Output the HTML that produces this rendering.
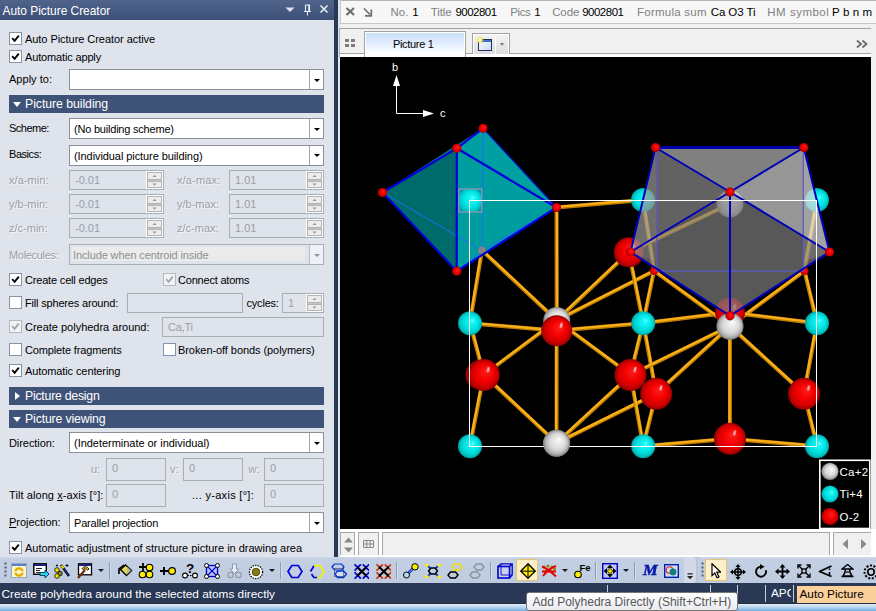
<!DOCTYPE html>
<html><head><meta charset="utf-8"><title>Auto Picture Creator</title>
<style>
*{box-sizing:border-box;margin:0;padding:0}
html,body{width:876px;height:611px;overflow:hidden;background:#f0f0f0}
body{position:relative;font-family:"Liberation Sans",sans-serif;font-size:11px;color:#000}
div,span,svg{position:absolute}
#left{left:0;top:0;width:334px;height:557px;background:#dee3ec}
#ltitle{left:0;top:0;width:334px;height:20px;background:linear-gradient(#51648b,#3c5077);color:#fff;font-size:11.9px;line-height:20px;white-space:nowrap}
#ltitle span{left:2.5px;top:1px}
#lstrip{left:334px;top:0;width:4px;height:557px;background:#293955}
#lstrip2{left:338px;top:0;width:2px;height:557px;background:#dfe3ea}
.t{white-space:nowrap;line-height:13px;height:13px}
.dis{color:#9b9ea5;text-shadow:1px 1px 0 #f8f9fb}
.cb{width:13px;height:13px;background:#fff;border:1px solid #8593aa}
.cb.d{background:#f2f3f5;border-color:#b5b8bd}
.cb svg{left:1px;top:1px;width:9px;height:9px}
.combo{height:21px;background:#fff;border:1px solid #8a8f99}
.combo .sep{right:13px;top:0;width:1px;height:19px;background:#9ea3ac}
.combo .ar{right:3.5px;top:8.5px;width:0;height:0;border-left:3px solid transparent;border-right:3px solid transparent;border-top:3.5px solid #000}
.combo .tx{left:4px;top:4px;white-space:nowrap;line-height:13px}
.combo.d{background:#dee3ec;border-color:#a9adb4}
.combo.d .tx{color:#8d9096;left:2px;top:2px;padding-top:1px;width:233px;height:14px;background:#ebebeb;line-height:14px;padding-left:1px}
.combo.d .sep{background:#b9bcc2;box-shadow:1px 0 0 #eef1f6,2px 0 0 #eef1f6,3px 0 0 #eef1f6,4px 0 0 #eef1f6,5px 0 0 #eef1f6,6px 0 0 #eef1f6,7px 0 0 #eef1f6,8px 0 0 #eef1f6,9px 0 0 #eef1f6,10px 0 0 #eef1f6,11px 0 0 #eef1f6,12px 0 0 #eef1f6,13px 0 0 #eef1f6}
.combo.d .ar{border-top-color:#8d9096}
.fld{background:#dee3ec;border:1px solid #a9adb4}
.fld .tx{left:5px;top:3px;color:#9b9ea5;line-height:13px;white-space:nowrap}
.spin{right:0;top:0;width:17px;height:18px;background:#fdfdfd}
.spin b{position:absolute;left:1px;width:15px;border:1px solid #b4b4b4;background:#ececec}
.spin b.u{top:1px;height:7.5px}
.spin b.dn{top:9.5px;height:7.5px}
.spin em{position:absolute;left:1px;top:8px;width:15px;height:2px;background:#c2c2c2}
.spin svg{left:6px;width:5px;height:3.3px}
.hdr{left:9px;width:315px;height:18px;background:#3f5379;color:#fff;font-size:12.3px;line-height:18px}
.hdr span{left:16px;top:0;white-space:nowrap}
.hdr i{position:absolute;width:0;height:0}
.hdr i.dn{left:4px;top:7px;border-left:4px solid transparent;border-right:4px solid transparent;border-top:5px solid #fff}
.hdr i.rt{left:6px;top:5px;border-top:4px solid transparent;border-bottom:4px solid transparent;border-left:5px solid #fff}
u{text-decoration:underline}
#info{left:340px;top:0;width:536px;height:24px;background:#f7f7f7;border-top:1px solid #b4b4b4;border-left:1px solid #c8c8c8}
#info .ib{left:0;top:22px;width:536px;height:1px;background:#c6c6c6}
.it{top:4px;font-size:11.5px;line-height:15px;color:#7f7f7f;white-space:nowrap}
.it.v{color:#000}
#tabbar{left:339px;top:28px;width:532px;height:29px;background:#f0f0f0;border-top:1px solid #a3a3a3;border-left:1px solid #b0b0b0}
#tabbar .ln{left:0;top:24px;width:531px;height:1px;background:#a3a3a3}
#tabbar .wh{left:0;top:25px;width:531px;height:3px;background:#fff}
#tab{left:24px;top:2px;width:102px;height:26px;border:1px solid #a3a3a3;border-bottom:0;background:linear-gradient(#c9defa,#e4effd 50%,#fff 85%);box-shadow:inset 1px 1px 0 #fff,inset -1px 0 0 #fff}
#tab span{left:28px;top:6px;line-height:13px;font-size:11px;letter-spacing:-0.33px;white-space:nowrap}
#newbtn{left:132px;top:4px;width:38px;height:21px;border:1px solid #a3a3a3;border-bottom:0;background:linear-gradient(#f4f4f4,#dcdcdc);box-shadow:inset 1px 1px 0 #fff,inset -1px 0 0 #fff}
#newbtn .sp{left:21.5px;top:2px;width:1px;height:18px;background:#fff}
#newbtn .ar{left:27px;top:8.5px;width:0;height:0;border-left:2.5px solid transparent;border-right:2.5px solid transparent;border-top:3px solid #7a7a7a}

#tb{left:0;top:557px;width:876px;height:26px;background:#b9c6dc}
#tb1{left:0;top:0;width:684px;height:26px;background:linear-gradient(#d3dbe9 0,#c3cfe2 2px,#bfcbdf 100%)}
#tb1o{left:684px;top:0;width:11.5px;height:26px;background:#d2dae8;border-radius:0 4px 4px 0}
#tb2{left:698px;top:0;width:178px;height:26px;background:linear-gradient(#d3dbe9 0,#c3cfe2 2px,#bfcbdf 100%);border-radius:4px 0 0 4px}
.tsep{top:4.5px;width:1px;height:17px;background:#8d99b0;box-shadow:1px 0 0 #d6deeb}
.tdd{top:11.5px;width:0;height:0;border-left:3px solid transparent;border-right:3px solid transparent;border-top:3px solid #1a1a1a}
.thl{top:2px;height:22px;background:#fdf0c8;border:1px solid #e5c66f;border-radius:2px}
#sb{left:0;top:583px;width:876px;height:20px;background:#293955;overflow:hidden}
#sbt{left:1.5px;top:3px;color:#fff;font-size:11.8px;line-height:16px;white-space:nowrap}
.ssep{top:2px;width:1px;background:#c3cbdc}
#apc{left:771px;top:2px;width:20px;overflow:hidden;color:#fff;font-size:11.8px;line-height:16px;white-space:nowrap}
#aptab{left:797px;top:2.5px;width:79px;height:17px;background:#fbd09a}
#aptab span{left:2.5px;top:0;font-size:11.8px;line-height:16px;white-space:nowrap;color:#000}
#bot{left:0;top:603px;width:876px;height:8px;background:linear-gradient(#222f47 0,#222f47 1px,#dfeaf6 1.5px,#bcd6ee 4px,#6fb0e4 8px)}
#tip{left:526px;top:592px;width:212px;height:19px;background:linear-gradient(#fff,#e9ebf1);border:1px solid #767676;border-radius:3px}
#tip span{left:5.5px;top:0.5px;font-size:12px;line-height:16px;color:#575757;white-space:nowrap}
#pic{left:340px;top:57px;width:531px;height:472px;background:#000}
#botrow{left:340px;top:529px;width:536px;height:28px;background:#fff}
#botrow .bx{top:3px;height:23px;background:#f0f0f0;border:1px solid #a8a8a8;border-bottom:0}

</style></head><body>
<div id="left"><div id="ltitle"><span>Auto Picture Creator</span>
<svg style="left:284px;top:3px" width="50" height="14" viewBox="0 0 50 14"><path d="M1.5 4.5 h9 l-4.5 4.5z" fill="#dfe4ee"/><path d="M21.5 8.5 v-6.5 h4 v6.5 M20 8.5 h7 M23.5 8.5 v4 M24.8 2 v6.5" fill="none" stroke="#e8ecf3" stroke-width="1.1"/><path d="M36.5 2.5 l7 7 M43.5 2.5 l-7 7" stroke="#eef1f6" stroke-width="1.5"/></svg>
</div>
<div class="cb" style="left:9px;top:32px"><svg viewBox="0 0 9 9"><path d="M1.2 4.2 L3.6 6.8 L7.8 1.6" fill="none" stroke="#000" stroke-width="1.9"/></svg></div>
<span class="t " style="left:25px;top:33px;letter-spacing:-0.05px">Auto Picture Creator active</span>
<div class="cb" style="left:9px;top:50px"><svg viewBox="0 0 9 9"><path d="M1.2 4.2 L3.6 6.8 L7.8 1.6" fill="none" stroke="#000" stroke-width="1.9"/></svg></div>
<span class="t " style="left:25px;top:51px;letter-spacing:-0.15px">Automatic apply</span>
<span class="t " style="left:9px;top:72.5px;letter-spacing:0.02px">Apply to:</span>
<div class="combo" style="left:69px;top:69px;width:255px"><span class="tx" style=""></span><div class="sep"></div><div class="ar"></div></div>
<div class="hdr" style="top:95px"><i class="dn"></i><span style="letter-spacing:-0.06px">Picture building</span></div>
<span class="t " style="left:9px;top:121.5px;letter-spacing:-0.5px">Scheme:</span>
<div class="combo" style="left:69px;top:118px;width:255px"><span class="tx" style="letter-spacing:-0.21px">(No building scheme)</span><div class="sep"></div><div class="ar"></div></div>
<span class="t " style="left:9px;top:148px;letter-spacing:-0.45px">Basics:</span>
<div class="combo" style="left:69px;top:144.5px;width:255px"><span class="tx" style="letter-spacing:-0.08px">(Individual picture building)</span><div class="sep"></div><div class="ar"></div></div>
<span class="t dis" style="left:9px;top:174px;letter-spacing:0.06px">x/a-min:</span>
<div class="fld" style="left:69px;top:170px;width:95px;height:20px"><span class="tx" style="top:2.5px">-0.01</span><div class="spin"><em></em><b class="u"></b><b class="dn"></b><svg style="top:3.2px" viewBox="0 0 6 4"><path d="M0.5 3.5L3 0.8L5.5 3.5z" fill="#9a9a9a"/></svg><svg style="top:11.5px" viewBox="0 0 6 4"><path d="M0.5 0.5L3 3.2L5.5 0.5z" fill="#9a9a9a"/></svg></div></div>
<span class="t dis" style="left:177px;top:174px;letter-spacing:0.15px">x/a-max:</span>
<div class="fld" style="left:229px;top:170px;width:95px;height:20px"><span class="tx" style="top:2.5px">1.01</span><div class="spin"><em></em><b class="u"></b><b class="dn"></b><svg style="top:3.2px" viewBox="0 0 6 4"><path d="M0.5 3.5L3 0.8L5.5 3.5z" fill="#9a9a9a"/></svg><svg style="top:11.5px" viewBox="0 0 6 4"><path d="M0.5 0.5L3 3.2L5.5 0.5z" fill="#9a9a9a"/></svg></div></div>
<span class="t dis" style="left:9px;top:198px">y/b-min:</span>
<div class="fld" style="left:69px;top:194px;width:95px;height:20px"><span class="tx" style="top:2.5px">-0.01</span><div class="spin"><em></em><b class="u"></b><b class="dn"></b><svg style="top:3.2px" viewBox="0 0 6 4"><path d="M0.5 3.5L3 0.8L5.5 3.5z" fill="#9a9a9a"/></svg><svg style="top:11.5px" viewBox="0 0 6 4"><path d="M0.5 0.5L3 3.2L5.5 0.5z" fill="#9a9a9a"/></svg></div></div>
<span class="t dis" style="left:177px;top:198px">y/b-max:</span>
<div class="fld" style="left:229px;top:194px;width:95px;height:20px"><span class="tx" style="top:2.5px">1.01</span><div class="spin"><em></em><b class="u"></b><b class="dn"></b><svg style="top:3.2px" viewBox="0 0 6 4"><path d="M0.5 3.5L3 0.8L5.5 3.5z" fill="#9a9a9a"/></svg><svg style="top:11.5px" viewBox="0 0 6 4"><path d="M0.5 0.5L3 3.2L5.5 0.5z" fill="#9a9a9a"/></svg></div></div>
<span class="t dis" style="left:9px;top:222px">z/c-min:</span>
<div class="fld" style="left:69px;top:218px;width:95px;height:20px"><span class="tx" style="top:2.5px">-0.01</span><div class="spin"><em></em><b class="u"></b><b class="dn"></b><svg style="top:3.2px" viewBox="0 0 6 4"><path d="M0.5 3.5L3 0.8L5.5 3.5z" fill="#9a9a9a"/></svg><svg style="top:11.5px" viewBox="0 0 6 4"><path d="M0.5 0.5L3 3.2L5.5 0.5z" fill="#9a9a9a"/></svg></div></div>
<span class="t dis" style="left:177px;top:222px">z/c-max:</span>
<div class="fld" style="left:229px;top:218px;width:95px;height:20px"><span class="tx" style="top:2.5px">1.01</span><div class="spin"><em></em><b class="u"></b><b class="dn"></b><svg style="top:3.2px" viewBox="0 0 6 4"><path d="M0.5 3.5L3 0.8L5.5 3.5z" fill="#9a9a9a"/></svg><svg style="top:11.5px" viewBox="0 0 6 4"><path d="M0.5 0.5L3 3.2L5.5 0.5z" fill="#9a9a9a"/></svg></div></div>
<span class="t dis" style="left:9px;top:249px;letter-spacing:-0.31px">Molecules:</span>
<div class="combo d" style="left:69px;top:244px;width:255px"><span class="tx" style="letter-spacing:-0.12px">Include when centroid inside</span><div class="sep"></div><div class="ar"></div></div>
<div class="cb" style="left:9px;top:273px"><svg viewBox="0 0 9 9"><path d="M1.2 4.2 L3.6 6.8 L7.8 1.6" fill="none" stroke="#000" stroke-width="1.9"/></svg></div>
<span class="t " style="left:25px;top:274px;letter-spacing:-0.18px">Create cell edges</span>
<div class="cb d" style="left:163px;top:273px"><svg viewBox="0 0 9 9"><path d="M1.2 4.2 L3.6 6.8 L7.8 1.6" fill="none" stroke="#a3a6ab" stroke-width="1.9"/></svg></div>
<span class="t " style="left:178px;top:274px;letter-spacing:-0.2px">Connect atoms</span>
<div class="cb" style="left:9px;top:296px"></div>
<span class="t " style="left:25px;top:297px;letter-spacing:-0.18px">Fill spheres around:</span>
<div class="fld" style="left:126.5px;top:293px;width:116px;height:20px"><span class="tx" style="top:2.5px"></span></div>
<span class="t " style="left:246.5px;top:297px;letter-spacing:-0.2px">cycles:</span>
<div class="fld" style="left:282px;top:293px;width:42px;height:20px"><span class="tx" style="top:2.5px">1</span><div class="spin"><em></em><b class="u"></b><b class="dn"></b><svg style="top:3.2px" viewBox="0 0 6 4"><path d="M0.5 3.5L3 0.8L5.5 3.5z" fill="#9a9a9a"/></svg><svg style="top:11.5px" viewBox="0 0 6 4"><path d="M0.5 0.5L3 3.2L5.5 0.5z" fill="#9a9a9a"/></svg></div></div>
<div class="cb d" style="left:9px;top:320px"><svg viewBox="0 0 9 9"><path d="M1.2 4.2 L3.6 6.8 L7.8 1.6" fill="none" stroke="#a3a6ab" stroke-width="1.9"/></svg></div>
<span class="t " style="left:25px;top:321px;letter-spacing:-0.01px">Create polyhedra around:</span>
<div class="fld" style="left:162px;top:317px;width:162px;height:20px"><span class="tx" style="top:2.5px;letter-spacing:-0.23px">Ca,Ti</span></div>
<div class="cb" style="left:9px;top:343px"></div>
<span class="t " style="left:25px;top:344px;letter-spacing:-0.14px">Complete fragments</span>
<div class="cb" style="left:163px;top:343px"></div>
<span class="t " style="left:178px;top:344px;letter-spacing:-0.07px">Broken-off bonds (polymers)</span>
<div class="cb" style="left:9px;top:364px"><svg viewBox="0 0 9 9"><path d="M1.2 4.2 L3.6 6.8 L7.8 1.6" fill="none" stroke="#000" stroke-width="1.9"/></svg></div>
<span class="t " style="left:25px;top:365px;letter-spacing:-0.1px">Automatic centering</span>
<div class="hdr" style="top:387px"><i class="rt"></i><span style="letter-spacing:-0.24px">Picture design</span></div>
<div class="hdr" style="top:410px"><i class="dn"></i><span style="letter-spacing:-0.15px">Picture viewing</span></div>
<span class="t " style="left:9px;top:437px;letter-spacing:-0.07px">Direction:</span>
<div class="combo" style="left:69px;top:432px;width:255px"><span class="tx" style="letter-spacing:-0.03px">(Indeterminate or individual)</span><div class="sep"></div><div class="ar"></div></div>
<span class="t dis" style="left:91px;top:463px">u:</span>
<div class="fld" style="left:106px;top:458px;width:60px;height:22.5px"><span class="tx" style="top:2.5px">0</span></div>
<span class="t dis" style="left:170px;top:463px">v:</span>
<div class="fld" style="left:183px;top:458px;width:60px;height:22.5px"><span class="tx" style="top:2.5px">0</span></div>
<span class="t dis" style="left:248.5px;top:463px">w:</span>
<div class="fld" style="left:264px;top:458px;width:60px;height:22.5px"><span class="tx" style="top:2.5px">0</span></div>
<span class="t " style="left:9px;top:489px;letter-spacing:0.08px">Tilt along <u>x</u>-axis [°]:</span>
<div class="fld" style="left:106px;top:484px;width:60px;height:22.5px"><span class="tx" style="top:2.5px">0</span></div>
<span class="t " style="left:192px;top:489px;letter-spacing:0.3px">... y-axis [°]:</span>
<div class="fld" style="left:264px;top:484px;width:60px;height:22.5px"><span class="tx" style="top:2.5px">0</span></div>
<span class="t " style="left:9px;top:516px;letter-spacing:-0.03px"><u>P</u>rojection:</span>
<div class="combo" style="left:69px;top:512px;width:255px"><span class="tx" style="letter-spacing:-0.17px">Parallel projection</span><div class="sep"></div><div class="ar"></div></div>
<div class="cb" style="left:9px;top:541px"><svg viewBox="0 0 9 9"><path d="M1.2 4.2 L3.6 6.8 L7.8 1.6" fill="none" stroke="#000" stroke-width="1.9"/></svg></div>
<span class="t " style="left:25px;top:542px;letter-spacing:-0.02px">Automatic adjustment of structure picture in drawing area</span>
</div><div id="lstrip"></div><div id="lstrip2"></div>
<div id="info"><div class="ib"></div>
<svg style="left:3.5px;top:5px" width="30" height="12" viewBox="0 0 30 12"><path d="M1.5 2 l7.5 7 M9 2 l-7.5 7" stroke="#6e6e6e" stroke-width="2.2" fill="none"/><path d="M19 2.5 l6 6 M26.3 3.5 v6.3 h-6.3" stroke="#6e6e6e" stroke-width="1.7" fill="none"/></svg>
<span class="it" style="left:49.5px;letter-spacing:0.07px">No.</span>
<span class="it v" style="left:71.3px;letter-spacing:0px">1</span>
<span class="it" style="left:89.7px;letter-spacing:-0.06px">Title</span>
<span class="it v" style="left:114.5px;letter-spacing:-0.54px">9002801</span>
<span class="it" style="left:169.3px;letter-spacing:-0.44px">Pics</span>
<span class="it v" style="left:193.2px;letter-spacing:0px">1</span>
<span class="it" style="left:211.2px;letter-spacing:-0.12px">Code</span>
<span class="it v" style="left:241.2px;letter-spacing:-0.5px">9002801</span>
<span class="it" style="left:296.1px;letter-spacing:0.23px">Formula sum</span>
<span class="it v" style="left:369.7px;letter-spacing:-0.08px">Ca O3 Ti</span>
<span class="it" style="left:426.3px;letter-spacing:0.5px">HM symbol</span>
<span class="it v" style="left:491.1px;letter-spacing:0.09px">P b n m</span>
</div>
<div id="tabbar"><div class="ln"></div><div class="wh"></div>
<svg style="left:5px;top:10px" width="12" height="10" viewBox="0 0 12 10"><path d="M0 0h4v3h-4zM6 0h4v3h-4zM0 5h4v3h-4zM6 5h4v3h-4z" fill="#7d7d7d"/></svg>
<div id="tab"><span>Picture 1</span></div>
<div id="newbtn"><svg style="left:2px;top:2px" width="19" height="16" viewBox="0 0 19 16"><defs><linearGradient id="nb" x1="0" y1="0" x2="1" y2="1"><stop offset="0" stop-color="#fff"/><stop offset="1" stop-color="#c4d8f8"/></linearGradient></defs><rect x="3.5" y="3.5" width="13" height="11" fill="url(#nb)" stroke="#22315e"/><rect x="4" y="4" width="12" height="2" fill="#3f6fc7"/><path d="M5 0.5v7M1.5 4h7M2.5 1.5l5 5M7.5 1.5l-5 5" stroke="#f2e24a" stroke-width="1.2"/><circle cx="5" cy="4" r="1.8" fill="#fffbc0"/></svg><div class="sp"></div><div class="ar"></div></div>
<svg style="left:516px;top:11px" width="12" height="8" viewBox="0 0 12 8"><path d="M1 0.5l4 3.5l-4 3.5M6.5 0.5l4 3.5l-4 3.5" stroke="#6e6e6e" stroke-width="1.9" fill="none"/></svg>
</div>
<div id="botrow"><div class="bx" style="left:0;width:15px"><svg style="left:2.5px;top:3.5px" width="9" height="16" viewBox="0 0 9 16"><path d="M0 5.5l4.5-5 4.5 5zM0 10.5l4.5 5 4.5-5z" fill="#8a8a8a"/></svg></div><div class="bx" style="left:18px;width:21px"><svg style="left:4px;top:7px" width="11" height="8" viewBox="0 0 11 8"><path d="M0.5 0.5h10v7h-10zM0.5 4h10M3.8 0.5v7M7.2 0.5v7" fill="none" stroke="#8a8a8a"/></svg></div><div class="bx" style="left:42px;width:448px"></div><div class="bx" style="left:493px;width:38px;border-right:0"><svg style="left:8px;top:6px" width="26" height="10" viewBox="0 0 26 10"><path d="M6 0v10l-5.5-5zM19 0v10l5.5-5z" fill="#8a8a8a"/></svg></div></div>
<svg id="pic" width="531" height="472" viewBox="0 0 531 472">
<defs><radialGradient id="gO" cx="0.5" cy="0.5" r="0.5" fx="0.6" fy="0.36"><stop offset="0" stop-color="#ff2020"/><stop offset="0.5" stop-color="#f40000"/><stop offset="0.82" stop-color="#cc0000"/><stop offset="1" stop-color="#8c0000"/></radialGradient><radialGradient id="gT" cx="0.5" cy="0.5" r="0.5" fx="0.62" fy="0.38"><stop offset="0" stop-color="#7affff"/><stop offset="0.18" stop-color="#18f6f6"/><stop offset="0.6" stop-color="#00e2e2"/><stop offset="0.85" stop-color="#00c6c6"/><stop offset="1" stop-color="#009a9a"/></radialGradient><radialGradient id="gC" cx="0.5" cy="0.5" r="0.5" fx="0.6" fy="0.36"><stop offset="0" stop-color="#ffffff"/><stop offset="0.2" stop-color="#eeeeee"/><stop offset="0.6" stop-color="#d8d8d8"/><stop offset="0.85" stop-color="#b0b0b0"/><stop offset="1" stop-color="#7c7c7c"/></radialGradient><filter id="bl" x="-1" y="-1" width="3" height="3"><feGaussianBlur stdDeviation="0.7"/></filter><linearGradient id="gB" x1="0" y1="0" x2="0" y2="1"><stop offset="0" stop-color="#ffb81c"/><stop offset="1" stop-color="#c07c00"/></linearGradient></defs>
<g transform="translate(0,-1)"><g stroke="#fff" stroke-width="1" fill="#fff"><path d="M56.5 57.5 V28 M56.5 57.5 H84" fill="none"/><path d="M56.5 19 l3.5 11 h-7z M94 57.5 l-11 3.5 v-7z" stroke="none"/></g>
<text x="52" y="15" fill="#fff" font-family="Liberation Sans,sans-serif" font-size="11">b</text><text x="100" y="61" fill="#fff" font-family="Liberation Sans,sans-serif" font-size="11">c</text></g>
<g><line x1="216.5" y1="150.5" x2="303.0" y2="143.0" stroke="#bf7e00" stroke-width="3.9" stroke-linecap="round"/><line x1="216.5" y1="150.0" x2="303.0" y2="142.5" stroke="#fdb21c" stroke-width="2.1"/></g>
<g><line x1="216.5" y1="150.5" x2="216.7" y2="263.5" stroke="#bf7e00" stroke-width="3.9" stroke-linecap="round"/><line x1="217.0" y1="150.5" x2="217.2" y2="263.5" stroke="#fdb21c" stroke-width="2.1"/></g>
<g><line x1="142.0" y1="193.5" x2="130.0" y2="266.2" stroke="#bf7e00" stroke-width="3.9" stroke-linecap="round"/><line x1="141.5" y1="193.4" x2="129.5" y2="266.2" stroke="#fdb21c" stroke-width="2.1"/></g>
<g><line x1="142.0" y1="193.5" x2="216.7" y2="263.5" stroke="#bf7e00" stroke-width="3.9" stroke-linecap="round"/><line x1="142.3" y1="193.1" x2="217.0" y2="263.1" stroke="#fdb21c" stroke-width="2.1"/></g>
<g><line x1="130.0" y1="266.2" x2="216.7" y2="273.8" stroke="#bf7e00" stroke-width="3.9" stroke-linecap="round"/><line x1="130.0" y1="265.8" x2="216.7" y2="273.3" stroke="#fdb21c" stroke-width="2.1"/></g>
<g><line x1="130.0" y1="266.2" x2="143.8" y2="318.0" stroke="#bf7e00" stroke-width="3.9" stroke-linecap="round"/><line x1="130.5" y1="266.1" x2="144.2" y2="317.9" stroke="#fdb21c" stroke-width="2.1"/></g>
<g><line x1="143.8" y1="318.0" x2="130.0" y2="389.2" stroke="#bf7e00" stroke-width="3.9" stroke-linecap="round"/><line x1="143.3" y1="317.9" x2="129.5" y2="389.2" stroke="#fdb21c" stroke-width="2.1"/></g>
<g><line x1="143.8" y1="318.0" x2="216.6" y2="386.2" stroke="#bf7e00" stroke-width="3.9" stroke-linecap="round"/><line x1="144.1" y1="317.6" x2="216.9" y2="385.8" stroke="#fdb21c" stroke-width="2.1"/></g>
<g><line x1="143.8" y1="318.0" x2="216.7" y2="263.5" stroke="#bf7e00" stroke-width="3.9" stroke-linecap="round"/><line x1="143.5" y1="317.6" x2="216.4" y2="263.1" stroke="#fdb21c" stroke-width="2.1"/></g>
<g><line x1="216.7" y1="263.5" x2="288.8" y2="195.3" stroke="#bf7e00" stroke-width="3.9" stroke-linecap="round"/><line x1="216.4" y1="263.1" x2="288.4" y2="194.9" stroke="#fdb21c" stroke-width="2.1"/></g>
<g><line x1="216.7" y1="263.5" x2="314.0" y2="214.0" stroke="#bf7e00" stroke-width="3.9" stroke-linecap="round"/><line x1="216.5" y1="263.1" x2="313.8" y2="213.6" stroke="#fdb21c" stroke-width="2.1"/></g>
<g><line x1="216.7" y1="263.5" x2="290.5" y2="318.0" stroke="#bf7e00" stroke-width="3.9" stroke-linecap="round"/><line x1="217.0" y1="263.1" x2="290.8" y2="317.6" stroke="#fdb21c" stroke-width="2.1"/></g>
<g><line x1="216.7" y1="273.8" x2="216.6" y2="386.2" stroke="#bf7e00" stroke-width="3.9" stroke-linecap="round"/><line x1="216.2" y1="273.8" x2="216.1" y2="386.2" stroke="#fdb21c" stroke-width="2.1"/></g>
<g><line x1="216.7" y1="273.8" x2="303.2" y2="266.2" stroke="#bf7e00" stroke-width="3.9" stroke-linecap="round"/><line x1="216.7" y1="273.3" x2="303.2" y2="265.8" stroke="#fdb21c" stroke-width="2.1"/></g>
<g><line x1="216.6" y1="386.2" x2="290.5" y2="318.0" stroke="#bf7e00" stroke-width="3.9" stroke-linecap="round"/><line x1="216.3" y1="385.8" x2="290.2" y2="317.6" stroke="#fdb21c" stroke-width="2.1"/></g>
<g><line x1="216.6" y1="386.2" x2="316.2" y2="336.8" stroke="#bf7e00" stroke-width="3.9" stroke-linecap="round"/><line x1="216.4" y1="385.8" x2="316.0" y2="336.3" stroke="#fdb21c" stroke-width="2.1"/></g>
<g><line x1="303.2" y1="266.2" x2="288.8" y2="195.3" stroke="#bf7e00" stroke-width="3.9" stroke-linecap="round"/><line x1="303.7" y1="266.1" x2="289.2" y2="195.2" stroke="#fdb21c" stroke-width="2.1"/></g>
<g><line x1="303.2" y1="266.2" x2="314.0" y2="214.0" stroke="#bf7e00" stroke-width="3.9" stroke-linecap="round"/><line x1="302.8" y1="266.1" x2="313.5" y2="213.9" stroke="#fdb21c" stroke-width="2.1"/></g>
<g><line x1="303.2" y1="266.2" x2="290.5" y2="318.0" stroke="#bf7e00" stroke-width="3.9" stroke-linecap="round"/><line x1="302.8" y1="266.1" x2="290.0" y2="317.9" stroke="#fdb21c" stroke-width="2.1"/></g>
<g><line x1="303.2" y1="266.2" x2="316.2" y2="336.8" stroke="#bf7e00" stroke-width="3.9" stroke-linecap="round"/><line x1="303.7" y1="266.2" x2="316.7" y2="336.7" stroke="#fdb21c" stroke-width="2.1"/></g>
<g><line x1="303.2" y1="266.2" x2="390.0" y2="255.5" stroke="#bf7e00" stroke-width="3.9" stroke-linecap="round"/><line x1="303.2" y1="265.8" x2="389.9" y2="255.0" stroke="#fdb21c" stroke-width="2.1"/></g>
<g><line x1="303.0" y1="143.0" x2="314.0" y2="214.0" stroke="#bf7e00" stroke-width="3.9" stroke-linecap="round"/><line x1="303.5" y1="142.9" x2="314.5" y2="213.9" stroke="#fdb21c" stroke-width="2.1"/></g>
<g><line x1="390.0" y1="147.0" x2="288.8" y2="195.3" stroke="#bf7e00" stroke-width="3.9" stroke-linecap="round"/><line x1="389.8" y1="146.5" x2="288.5" y2="194.8" stroke="#fdb21c" stroke-width="2.1"/></g>
<g><line x1="477.0" y1="143.0" x2="464.5" y2="214.0" stroke="#bf7e00" stroke-width="3.9" stroke-linecap="round"/><line x1="476.5" y1="142.9" x2="464.0" y2="213.9" stroke="#fdb21c" stroke-width="2.1"/></g>
<g><line x1="314.0" y1="214.0" x2="390.0" y2="269.2" stroke="#bf7e00" stroke-width="3.9" stroke-linecap="round"/><line x1="314.3" y1="213.6" x2="390.3" y2="268.8" stroke="#fdb21c" stroke-width="2.1"/></g>
<g><line x1="464.5" y1="214.0" x2="390.0" y2="269.2" stroke="#bf7e00" stroke-width="3.9" stroke-linecap="round"/><line x1="464.2" y1="213.6" x2="389.7" y2="268.8" stroke="#fdb21c" stroke-width="2.1"/></g>
<g><line x1="464.5" y1="214.0" x2="477.0" y2="266.2" stroke="#bf7e00" stroke-width="3.9" stroke-linecap="round"/><line x1="465.0" y1="213.9" x2="477.5" y2="266.1" stroke="#fdb21c" stroke-width="2.1"/></g>
<g><line x1="390.0" y1="269.2" x2="290.5" y2="318.0" stroke="#bf7e00" stroke-width="3.9" stroke-linecap="round"/><line x1="389.8" y1="268.8" x2="290.3" y2="317.6" stroke="#fdb21c" stroke-width="2.1"/></g>
<g><line x1="390.0" y1="269.2" x2="316.2" y2="336.8" stroke="#bf7e00" stroke-width="3.9" stroke-linecap="round"/><line x1="389.7" y1="268.9" x2="315.9" y2="336.4" stroke="#fdb21c" stroke-width="2.1"/></g>
<g><line x1="390.0" y1="269.2" x2="390.0" y2="381.8" stroke="#bf7e00" stroke-width="3.9" stroke-linecap="round"/><line x1="389.5" y1="269.2" x2="389.5" y2="381.8" stroke="#fdb21c" stroke-width="2.1"/></g>
<g><line x1="390.0" y1="269.2" x2="464.0" y2="336.8" stroke="#bf7e00" stroke-width="3.9" stroke-linecap="round"/><line x1="390.3" y1="268.9" x2="464.3" y2="336.4" stroke="#fdb21c" stroke-width="2.1"/></g>
<g><line x1="390.0" y1="255.5" x2="477.0" y2="266.2" stroke="#bf7e00" stroke-width="3.9" stroke-linecap="round"/><line x1="390.1" y1="255.0" x2="477.1" y2="265.8" stroke="#fdb21c" stroke-width="2.1"/></g>
<g><line x1="477.0" y1="266.2" x2="464.0" y2="336.8" stroke="#bf7e00" stroke-width="3.9" stroke-linecap="round"/><line x1="476.5" y1="266.2" x2="463.5" y2="336.7" stroke="#fdb21c" stroke-width="2.1"/></g>
<g><line x1="477.0" y1="389.2" x2="464.0" y2="336.8" stroke="#bf7e00" stroke-width="3.9" stroke-linecap="round"/><line x1="477.5" y1="389.1" x2="464.5" y2="336.6" stroke="#fdb21c" stroke-width="2.1"/></g>
<g><line x1="477.0" y1="389.2" x2="390.0" y2="381.8" stroke="#bf7e00" stroke-width="3.9" stroke-linecap="round"/><line x1="477.0" y1="388.8" x2="390.0" y2="381.3" stroke="#fdb21c" stroke-width="2.1"/></g>
<g><line x1="303.2" y1="389.2" x2="290.5" y2="318.0" stroke="#bf7e00" stroke-width="3.9" stroke-linecap="round"/><line x1="303.7" y1="389.2" x2="291.0" y2="317.9" stroke="#fdb21c" stroke-width="2.1"/></g>
<g><line x1="303.2" y1="389.2" x2="316.2" y2="336.8" stroke="#bf7e00" stroke-width="3.9" stroke-linecap="round"/><line x1="302.8" y1="389.1" x2="315.8" y2="336.6" stroke="#fdb21c" stroke-width="2.1"/></g>
<g><line x1="303.2" y1="389.2" x2="390.0" y2="381.8" stroke="#bf7e00" stroke-width="3.9" stroke-linecap="round"/><line x1="303.2" y1="388.8" x2="390.0" y2="381.3" stroke="#fdb21c" stroke-width="2.1"/></g>
<circle cx="216.7" cy="263.5" r="13.5" fill="url(#gC)"/>
<circle cx="390.0" cy="147.0" r="13.5" fill="url(#gC)"/>
<circle cx="390.0" cy="255.5" r="15" fill="url(#gO)"/>
<ellipse cx="394.6" cy="249.9" rx="1.2" ry="3" fill="#ffb0b0" transform="rotate(14 394.6 249.9)" filter="url(#bl)"/>
<circle cx="140.5" cy="318.0" r="15" fill="url(#gO)"/>
<ellipse cx="145.1" cy="312.4" rx="1.2" ry="3" fill="#ffb0b0" transform="rotate(14 145.1 312.4)" filter="url(#bl)"/>
<circle cx="303.0" cy="143.0" r="12" fill="url(#gT)"/>
<circle cx="477.0" cy="143.0" r="12" fill="url(#gT)"/>
<circle cx="130.0" cy="266.2" r="12" fill="url(#gT)"/>
<circle cx="303.2" cy="266.2" r="12" fill="url(#gT)"/>
<circle cx="477.0" cy="266.2" r="12" fill="url(#gT)"/>
<circle cx="130.0" cy="389.2" r="12" fill="url(#gT)"/>
<circle cx="303.2" cy="389.2" r="12" fill="url(#gT)"/>
<circle cx="477.0" cy="389.2" r="12" fill="url(#gT)"/>
<circle cx="288.8" cy="195.3" r="15" fill="url(#gO)"/>
<ellipse cx="293.4" cy="189.7" rx="1.2" ry="3" fill="#ffb0b0" transform="rotate(14 293.4 189.7)" filter="url(#bl)"/>
<circle cx="290.5" cy="318.0" r="16" fill="url(#gO)"/>
<ellipse cx="295.1" cy="312.4" rx="1.2" ry="3" fill="#ffb0b0" transform="rotate(14 295.1 312.4)" filter="url(#bl)"/>
<circle cx="316.2" cy="336.8" r="16" fill="url(#gO)"/>
<ellipse cx="320.9" cy="331.1" rx="1.2" ry="3" fill="#ffb0b0" transform="rotate(14 320.9 331.1)" filter="url(#bl)"/>
<circle cx="143.8" cy="318.0" r="16" fill="url(#gO)"/>
<ellipse cx="148.3" cy="312.4" rx="1.2" ry="3" fill="#ffb0b0" transform="rotate(14 148.3 312.4)" filter="url(#bl)"/>
<circle cx="216.7" cy="273.8" r="15.5" fill="url(#gO)"/>
<ellipse cx="221.3" cy="268.2" rx="1.2" ry="3" fill="#ffb0b0" transform="rotate(14 221.3 268.2)" filter="url(#bl)"/>
<circle cx="390.0" cy="381.8" r="16" fill="url(#gO)"/>
<ellipse cx="394.6" cy="376.1" rx="1.2" ry="3" fill="#ffb0b0" transform="rotate(14 394.6 376.1)" filter="url(#bl)"/>
<circle cx="464.0" cy="336.8" r="16" fill="url(#gO)"/>
<ellipse cx="468.6" cy="331.1" rx="1.2" ry="3" fill="#ffb0b0" transform="rotate(14 468.6 331.1)" filter="url(#bl)"/>
<circle cx="390.0" cy="269.2" r="13.5" fill="url(#gC)"/>
<circle cx="216.6" cy="386.2" r="13.5" fill="url(#gC)"/>
<circle cx="142.0" cy="193.5" r="4" fill="url(#gO)"/>
<circle cx="314.0" cy="214.0" r="4" fill="url(#gO)"/>
<circle cx="464.5" cy="214.0" r="4" fill="url(#gO)"/>
<polygon points="42.5,135.5 116.8,91.3 143.0,71.3" fill="#008c8c" fill-opacity="0.95"/>
<polygon points="42.5,135.5 116.8,91.3 116.7,214.2" fill="#006f6f" fill-opacity="0.96"/>
<polygon points="116.8,91.3 216.5,150.5 116.7,214.2" fill="#00a2a4" fill-opacity="0.97"/>
<polygon points="116.8,91.3 143.0,71.3 216.5,150.5" fill="#00a4a6" fill-opacity="0.97"/>
<line x1="143.0" y1="71.3" x2="142.0" y2="193.5" stroke="#1f6cff" stroke-width="1" />
<line x1="42.5" y1="135.5" x2="142.0" y2="193.5" stroke="#1f6cff" stroke-width="1" />
<line x1="142.0" y1="193.5" x2="216.5" y2="150.5" stroke="#1f6cff" stroke-width="1" />
<line x1="142.0" y1="193.5" x2="116.7" y2="214.2" stroke="#1f6cff" stroke-width="1" />
<circle cx="142.0" cy="193.5" r="4" fill="url(#gO)" opacity="0.35"/>
<circle cx="142.0" cy="193.5" r="4" fill="#8c8c8c" opacity="0.8"/>
<clipPath id="cpT"><rect x="119.3" y="132.5" width="22" height="22"/></clipPath><g clip-path="url(#cpT)">
<circle cx="130.0" cy="143.5" r="13" fill="url(#gT)"/>
</g>
<rect x="118.8" y="132.0" width="23" height="23" fill="none" stroke="#9a9ab8" stroke-width="1.2"/>
<line x1="143.0" y1="71.3" x2="216.5" y2="150.5" stroke="#0010c8" stroke-width="1.2" />
<line x1="42.5" y1="135.5" x2="116.8" y2="91.3" stroke="#0000d8" stroke-width="2.2" stroke-linecap="round"/>
<line x1="116.8" y1="91.3" x2="143.0" y2="71.3" stroke="#0000d8" stroke-width="2.2" stroke-linecap="round"/>
<line x1="216.5" y1="150.5" x2="116.7" y2="214.2" stroke="#0000d8" stroke-width="2.2" stroke-linecap="round"/>
<line x1="116.7" y1="214.2" x2="42.5" y2="135.5" stroke="#0000d8" stroke-width="2.2" stroke-linecap="round"/>
<line x1="116.8" y1="91.3" x2="116.7" y2="214.2" stroke="#0000d8" stroke-width="2.2" stroke-linecap="round"/>
<line x1="116.8" y1="91.3" x2="216.5" y2="150.5" stroke="#0000d8" stroke-width="2.2" stroke-linecap="round"/>
<circle cx="42.5" cy="135.5" r="4.6" fill="url(#gO)"/>
<circle cx="116.8" cy="91.3" r="4.6" fill="url(#gO)"/>
<circle cx="143.0" cy="71.3" r="4.6" fill="url(#gO)"/>
<circle cx="216.5" cy="150.5" r="4.6" fill="url(#gO)"/>
<circle cx="116.7" cy="214.2" r="4.6" fill="url(#gO)"/>
<polygon points="315.5,90.5 463.8,90.5 390.0,135.0" fill="#b6b6b6" fill-opacity="0.7"/>
<polygon points="390.0,135.0 463.8,90.5 489.5,195.0" fill="#d6d6d6" fill-opacity="0.7"/>
<polygon points="315.5,90.5 390.0,135.0 290.5,195.0" fill="#8c8c8c" fill-opacity="0.7"/>
<polygon points="290.5,195.0 390.0,135.0 390.0,258.8" fill="#7d7d7d" fill-opacity="0.7"/>
<polygon points="390.0,135.0 489.5,195.0 390.0,258.8" fill="#7d7d7d" fill-opacity="0.7"/>
<polygon points="315.5,90.5 290.5,195.0 316.7,205.0" fill="#fff" fill-opacity="0.08"/>
<polygon points="463.8,90.5 489.5,195.0 463.3,205.0" fill="#fff" fill-opacity="0.12"/>
<line x1="316.7" y1="91.0" x2="316.7" y2="214.0" stroke="#5a5ac8" stroke-width="1.4" opacity="0.85"/>
<line x1="463.3" y1="91.0" x2="463.3" y2="214.0" stroke="#5a5ac8" stroke-width="1.4" opacity="0.85"/>
<line x1="316.7" y1="214.0" x2="463.3" y2="214.0" stroke="#5a5ac8" stroke-width="1.4" opacity="0.85"/>
<line x1="315.5" y1="90.5" x2="463.8" y2="90.5" stroke="#0000a8" stroke-width="3" />
<line x1="315.5" y1="90.5" x2="390.0" y2="135.0" stroke="#0000b8" stroke-width="2" stroke-linecap="round"/>
<line x1="463.8" y1="90.5" x2="390.0" y2="135.0" stroke="#0000b8" stroke-width="2" stroke-linecap="round"/>
<line x1="390.0" y1="135.0" x2="290.5" y2="195.0" stroke="#0000b8" stroke-width="2" stroke-linecap="round"/>
<line x1="390.0" y1="135.0" x2="489.5" y2="195.0" stroke="#0000b8" stroke-width="2" stroke-linecap="round"/>
<line x1="390.0" y1="135.0" x2="390.0" y2="258.8" stroke="#0000b8" stroke-width="2" stroke-linecap="round"/>
<line x1="315.5" y1="90.5" x2="290.5" y2="195.0" stroke="#0000b8" stroke-width="2" stroke-linecap="round"/>
<line x1="463.8" y1="90.5" x2="489.5" y2="195.0" stroke="#0000b8" stroke-width="2" stroke-linecap="round"/>
<line x1="290.5" y1="195.0" x2="390.0" y2="258.8" stroke="#0000b8" stroke-width="2" stroke-linecap="round"/>
<line x1="489.5" y1="195.0" x2="390.0" y2="258.8" stroke="#0000b8" stroke-width="2" stroke-linecap="round"/>
<circle cx="315.5" cy="90.5" r="4.6" fill="url(#gO)"/>
<circle cx="463.8" cy="90.5" r="4.6" fill="url(#gO)"/>
<circle cx="390.0" cy="135.0" r="4.6" fill="url(#gO)"/>
<circle cx="290.5" cy="195.0" r="4.6" fill="url(#gO)"/>
<circle cx="489.5" cy="195.0" r="4.6" fill="url(#gO)"/>
<circle cx="390.0" cy="258.8" r="4.6" fill="url(#gO)"/>
<rect x="129.5" y="143.5" width="347.0" height="246.0" fill="none" stroke="#fff" stroke-width="1"/>
<circle cx="216.6" cy="386.2" r="13.4" fill="url(#gC)"/>
<rect x="479.8" y="403.3" width="50" height="68.2" fill="#000" stroke="#fff" stroke-width="1.6"/>
<circle cx="490.0" cy="414.3" r="8.6" fill="url(#gC)"/>
<circle cx="490.0" cy="437.0" r="8.6" fill="url(#gT)"/>
<circle cx="490.0" cy="459.5" r="8.6" fill="url(#gO)"/>
<g fill="#fff" font-family="Liberation Sans,sans-serif" font-size="11.5" letter-spacing="0.3"><text x="499.5" y="418.5">Ca+2</text><text x="499.5" y="441">Ti+4</text><text x="499.5" y="463.5">O-2</text></g>
</svg>
<div id="tb"><div id="tb1"></div><div id="tb1o"><svg style="left:2.5px;top:15.5px" width="7" height="7" viewBox="0 0 8 8"><path d="M0.5 1h6" stroke="#222" stroke-width="1.4"/><path d="M0 3.5h7l-3.5 3.5z" fill="#222"/></svg></div><div id="tb2"></div>
<svg style="left:4px;top:5px" width="3" height="16" viewBox="0 0 3 16"><path d="M0.5 0.5h2v2h-2zM0.5 4.5h2v2h-2zM0.5 8.5h2v2h-2zM0.5 12.5h2v2h-2z" fill="#4d5d7d"/></svg>
<svg style="left:11px;top:6px" width="16" height="16" viewBox="0 0 16 16"><rect x="0.5" y="0.5" width="15" height="14" fill="#fbf4cc" stroke="#9aa7c4"/><rect x="1" y="1" width="14" height="2" fill="#5f80c8"/><circle cx="8" cy="9" r="3.6" fill="none" stroke="#e0b000" stroke-width="2.4"/><path d="M3 9h3M10 9h3" stroke="#fbf4cc" stroke-width="1.6"/></svg>
<svg style="left:33px;top:6px" width="16" height="16" viewBox="0 0 16 16"><rect x="0.8" y="0.8" width="12.5" height="10.5" fill="#fff" stroke="#000" stroke-width="1.4"/><rect x="1" y="1" width="12" height="2" fill="#202080"/><path d="M3 5.5h6M3 7.5h4M3 9.5h4" stroke="#222" stroke-width="1"/><path d="M7 9.5h5v-2.5l4 4-4 4v-2.5h-5z" fill="#20d8e8" stroke="#003060" stroke-width="0.9"/></svg>
<svg style="left:54px;top:6px" width="16" height="16" viewBox="0 0 16 16"><path d="M7 2l8 11" stroke="#000" stroke-width="2.6"/><path d="M7.5 2.6l2 2.8" stroke="#f0e000" stroke-width="2"/><path d="M10 5.8l5 7" stroke="#2030a0" stroke-width="1.2"/><circle cx="3" cy="7" r="2.3" fill="#f8e800" stroke="#000" stroke-width="0.8"/><circle cx="6" cy="10.5" r="2.3" fill="#8a8a20" stroke="#000" stroke-width="0.8"/><circle cx="3" cy="13" r="2.3" fill="#f8e800" stroke="#000" stroke-width="0.8"/><path d="M13 1v3M11.5 2.5h3M3 1.5v2M2 2.5h2" stroke="#000" stroke-width="0.9"/></svg>
<svg style="left:77px;top:6px" width="16" height="16" viewBox="0 0 16 16"><rect x="1.5" y="0.8" width="13" height="11" fill="#fff" stroke="#000" stroke-width="1.3"/><rect x="2" y="1" width="12" height="2" fill="#202080"/><path d="M1 15l7-8" stroke="#6a2a00" stroke-width="2.2"/><path d="M5 5.5c2-2.5 5-2.5 7 0.5l-1.5 1c-1.5-1.5-3-1.5-4-0.5z" fill="#f0c000" stroke="#000" stroke-width="0.9"/></svg>
<div class="tdd" style="left:98px"></div>
<div class="tsep" style="left:109px"></div>
<svg style="left:117px;top:6px" width="16" height="16" viewBox="0 0 16 16"><path d="M2 11V6l5-4" fill="none" stroke="#000" stroke-width="1.6"/><path d="M3.5 6.5l5-4.5 6 5.5-5 5z" fill="#e8e040" stroke="#000" stroke-width="1.4"/><path d="M9.5 3l5 4.5-5 4.5z" fill="#b0b0b0" opacity="0.7"/></svg>
<svg style="left:138px;top:5.5px" width="16" height="16" viewBox="0 0 16 16"><path d="M1 4h8M5 0v8" stroke="#000" stroke-width="1.8"/><circle cx="11.5" cy="4.5" r="3.3" fill="#ffee00" stroke="#000" stroke-width="1.1"/><circle cx="4.5" cy="11.5" r="3.3" fill="#ffee00" stroke="#000" stroke-width="1.1"/><circle cx="11.5" cy="11.5" r="3.3" fill="#ffee00" stroke="#000" stroke-width="1.1"/></svg>
<svg style="left:160px;top:6px" width="16" height="16" viewBox="0 0 16 16"><path d="M0 8h9M4 4v8" stroke="#000" stroke-width="1.9"/><circle cx="12" cy="8" r="3.4" fill="#ffee00" stroke="#000" stroke-width="1.2"/></svg>
<svg style="left:182px;top:6px" width="16" height="16" viewBox="0 0 16 16"><text x="4" y="10" font-family="Liberation Sans,sans-serif" font-weight="bold" font-size="13.5" fill="#000">?</text><circle cx="3" cy="12.5" r="2.4" fill="#fff" stroke="#000" stroke-width="1.1"/><circle cx="13" cy="12.5" r="2.4" fill="#fff" stroke="#000" stroke-width="1.1"/><path d="M5.5 12.5h5" stroke="#000" stroke-width="1" stroke-dasharray="1.5 1"/></svg>
<svg style="left:204px;top:6px" width="16" height="16" viewBox="0 0 16 16"><rect x="2.5" y="2.5" width="11" height="11" fill="#b8c4f4" stroke="#0000d0" stroke-width="1.3"/><path d="M2.5 2.5l11 11M13.5 2.5l-11 11" stroke="#0000d0" stroke-width="1.1"/><g fill="#fff" stroke="#000" stroke-width="1"><circle cx="2.5" cy="2.5" r="2"/><circle cx="13.5" cy="2.5" r="2"/><circle cx="2.5" cy="13.5" r="2"/><circle cx="13.5" cy="13.5" r="2"/></g></svg>
<svg style="left:227px;top:6px" width="16" height="16" viewBox="0 0 16 16"><path d="M5.5 1h4v5h2.5l-4.5 4.5-4.5-4.5h2.5z" fill="#e8ebf1" stroke="#8f97a6" stroke-width="1"/><circle cx="3.5" cy="12" r="2.7" fill="none" stroke="#8f97a6" stroke-width="1.1"/><circle cx="11.5" cy="12" r="2.7" fill="none" stroke="#8f97a6" stroke-width="1.1"/></svg>
<svg style="left:248px;top:6.5px" width="16" height="16" viewBox="0 0 16 16"><circle cx="8" cy="8" r="6.6" fill="#fff" stroke="#000" stroke-width="1.3" stroke-dasharray="1.3 1.2"/><circle cx="8" cy="8" r="3.8" fill="#8a7a14" stroke="#3a3000" stroke-width="0.8"/></svg>
<div class="tdd" style="left:269px"></div>
<div class="tsep" style="left:280px"></div>
<svg style="left:287px;top:6.5px" width="16" height="15" viewBox="0 0 16 15"><path d="M1 7.5l3.8-6h6.4l3.8 6-3.8 6h-6.4z" fill="none" stroke="#0000e0" stroke-width="1.7"/></svg>
<svg style="left:309px;top:6.5px" width="16" height="15" viewBox="0 0 16 15"><path d="M1.5 7.5l3.5-5.8" stroke="#0000e0" stroke-width="1.7"/><path d="M2.5 10l2.3 3.5h3.5" fill="none" stroke="#0000e0" stroke-width="1.7"/><path d="M5 1.7h6.2l3.8 5.8-3.8 6h-3" fill="none" stroke="#f4f000" stroke-width="1.7"/></svg>
<svg style="left:331px;top:6px" width="16" height="16" viewBox="0 0 16 16"><rect x="3.5" y="5.5" width="9" height="8" fill="#d8dce4" stroke="#707880" stroke-width="1"/><path d="M1 4l2.5-3h7l2.5 3-2.5 3h-7z" fill="none" stroke="#0030d0" stroke-width="1.2"/><path d="M4 11l2.5-3h6l3 3-3 3.5h-6z" fill="none" stroke="#0030d0" stroke-width="1.3"/></svg>
<svg style="left:354px;top:6.5px" width="15" height="15" viewBox="0 0 15 15"><path d="M0.5 0.3l6.4 6.4M6.9 0.3l-6.4 6.4M8.8 0.3l6.4 6.4M15.2 0.3l-6.4 6.4M0.5 8.3l6.4 6.4M6.9 8.3l-6.4 6.4M8.8 8.3l6.4 6.4M15.2 8.3l-6.4 6.4" stroke="#0000e0" stroke-width="1.7"/><path d="M3.2 3L12.5 12M12.5 3L3.2 12" stroke="#000" stroke-width="1.9"/><path d="M2.7 3.5h2M11 3.5h2M2.7 11.5h2M11 11.5h2" stroke="#000" stroke-width="1.8"/></svg>
<svg style="left:376px;top:6.5px" width="15" height="15" viewBox="0 0 15 15"><path d="M0.5 0.3l6.4 6.4M6.9 0.3l-6.4 6.4M8.8 0.3l6.4 6.4M15.2 0.3l-6.4 6.4M0.5 8.3l6.4 6.4M6.9 8.3l-6.4 6.4M8.8 8.3l6.4 6.4M15.2 8.3l-6.4 6.4" stroke="#d03010" stroke-width="1.7"/><path d="M3.2 3L12.5 12M12.5 3L3.2 12" stroke="#000" stroke-width="1.9"/><path d="M2.7 3.5h2M11 3.5h2M2.7 11.5h2M11 11.5h2" stroke="#000" stroke-width="1.8"/></svg>
<div class="tsep" style="left:396px"></div>
<svg style="left:403px;top:6px" width="16" height="16" viewBox="0 0 16 16"><path d="M4 11.5l7-7" stroke="#0030c0" stroke-width="2.6"/><path d="M4 11.5l7-7" stroke="#a8c8f8" stroke-width="0.9"/><circle cx="3.5" cy="12" r="3" fill="#b8d8f8" stroke="#000" stroke-width="1"/><circle cx="12" cy="3.8" r="3.2" fill="#ffee00" stroke="#000" stroke-width="1"/></svg>
<svg style="left:425px;top:6px" width="16" height="16" viewBox="0 0 16 16"><path d="M3 3l2.5 2.5M13 3l-2.5 2.5M3 13l2.5-2.5M13 13l-2.5-2.5" stroke="#1030d0" stroke-width="1.8"/><path d="M3.5 8l2.5-3h4l2.5 3-2.5 3h-4z" fill="none" stroke="#000" stroke-width="1.4"/><g fill="#ffee00"><rect x="0" y="1" width="3.5" height="2.5"/><rect x="12.5" y="1" width="3.5" height="2.5"/><rect x="0" y="12.5" width="3.5" height="2.5"/><rect x="12.5" y="12.5" width="3.5" height="2.5"/></g></svg>
<svg style="left:447px;top:6px" width="16" height="16" viewBox="0 0 16 16"><path d="M5 4l2.5-3h5l2.5 3-2.5 3h-5z" fill="none" stroke="#e8e000" stroke-width="1.5"/><path d="M1 12l2.5-3h5l2.5 3-2.5 3h-5z" fill="none" stroke="#000" stroke-width="1.4"/></svg>
<svg style="left:469px;top:6px" width="16" height="16" viewBox="0 0 16 16"><path d="M5 4l2.5-3h5l2.5 3-2.5 3h-5z" fill="none" stroke="#8a909c" stroke-width="1.3"/><path d="M1 12l2.5-3h5l2.5 3-2.5 3h-5z" fill="none" stroke="#8a909c" stroke-width="1.3"/></svg>
<div class="tsep" style="left:490px"></div>
<svg style="left:497px;top:6px" width="16" height="16" viewBox="0 0 16 16"><rect x="1" y="3.5" width="11.5" height="11.5" fill="#c8d0f0" stroke="#0000c8" stroke-width="1.6"/><path d="M1 3.5l3-2.7h11.2v11.2l-2.7 3M12.5 3.5l2.7-2.7" fill="none" stroke="#0000c8" stroke-width="1.3"/><path d="M4 1v11h11" fill="none" stroke="#0000c8" stroke-width="0.9"/></svg>
<div class="thl" style="left:516px;width:22px"></div>
<svg style="left:519.5px;top:5.7px" width="16" height="16" viewBox="0 0 16 16"><path d="M8 0.8l7.2 7.4-7.2 7-7.2-7z" fill="#ffee00" stroke="#000" stroke-width="1.3"/><path d="M8 0.8v14.4M0.8 8.2h14.4" stroke="#000" stroke-width="1"/></svg>
<svg style="left:541px;top:6px" width="16" height="16" viewBox="0 0 16 16"><g fill="#8a8a10"><circle cx="3" cy="4" r="1.6"/><circle cx="7" cy="3" r="1.6"/><circle cx="11" cy="4" r="1.6"/><circle cx="13.5" cy="6" r="1.6"/><circle cx="5" cy="8" r="1.6"/><circle cx="9" cy="8" r="1.6"/></g><path d="M1 3.5c5 2 9 5 14 10M15 3c-5 1.5-9 5-13 10M1 8.5h14" stroke="#e80000" stroke-width="1.9" fill="none"/></svg>
<div class="tdd" style="left:561.5px"></div>
<svg style="left:574px;top:6px" width="18" height="16" viewBox="0 0 18 16"><circle cx="4" cy="11.5" r="3.3" fill="#ffee00" stroke="#000" stroke-width="1.1"/><text x="5.5" y="8" font-family="Liberation Sans,sans-serif" font-weight="bold" font-size="9.5" fill="#000">Fe</text></svg>
<div class="tsep" style="left:595px"></div>
<svg style="left:602px;top:6px" width="16" height="16" viewBox="0 0 16 16"><rect x="0.7" y="0.7" width="14.6" height="14.6" fill="#c0c8f0" stroke="#0000c8" stroke-width="1.4"/><path d="M8 1.5l3 3.5h-6zM8 14.5l3-3.5h-6zM1.5 8l3.5-3v6zM14.5 8l-3.5-3v6z" fill="#000"/><circle cx="8" cy="8" r="2.3" fill="#ffee00" stroke="#000" stroke-width="0.7"/></svg>
<div class="tdd" style="left:623px"></div>
<div class="tsep" style="left:634px"></div>
<span style="left:642.5px;top:6.5px;font-family:'Liberation Serif',serif;font-weight:bold;font-style:italic;font-size:14px;line-height:14px;color:#0018a8;transform:scaleX(1.18);transform-origin:0 0;-webkit-text-stroke:0.4px #0018a8">M</span>
<svg style="left:664px;top:7px" width="15" height="14" viewBox="0 0 15 14"><rect x="0.7" y="0.7" width="13.6" height="12.6" fill="#d4dcf0" stroke="#0020b0" stroke-width="1.4"/><circle cx="5.5" cy="6" r="3.3" fill="none" stroke="#e02020" stroke-width="1.1"/><circle cx="9" cy="8" r="3.4" fill="#108078"/></svg>
<svg style="left:701px;top:5px" width="3" height="16" viewBox="0 0 3 16"><path d="M0.5 0.5h2v2h-2zM0.5 4.5h2v2h-2zM0.5 8.5h2v2h-2zM0.5 12.5h2v2h-2z" fill="#4d5d7d"/></svg>
<div class="thl" style="left:705px;width:22px"></div>
<svg style="left:711px;top:5.5px" width="10" height="16" viewBox="0 0 10 16"><path d="M1 0.7v12l2.8-2.7 2.2 4.8 2-0.9-2.2-4.7h4z" fill="#fff" stroke="#000" stroke-width="1.2" stroke-linejoin="miter"/></svg>
<svg style="left:730px;top:6.5px" width="16" height="16" viewBox="0 0 16 16"><circle cx="8" cy="8" r="3.3" fill="none" stroke="#000" stroke-width="1.5"/><path d="M8 0l2.6 3h-5.2zM8 16l2.6-3h-5.2zM0 8l3-2.6v5.2zM16 8l-3-2.6v5.2z" fill="#000"/><path d="M8 2v12M2 8h12" stroke="#000" stroke-width="1.5"/></svg>
<svg style="left:753px;top:6.5px" width="14" height="15" viewBox="0 0 14 15"><path d="M8.5 2.7a5 5 0 1 0 4.3 3.5" fill="none" stroke="#000" stroke-width="1.9"/><path d="M7 0l4.5 2.7-4.5 2.8z" fill="#000"/></svg>
<svg style="left:775px;top:6.5px" width="15" height="15" viewBox="0 0 15 15"><path d="M7.5 0l3 3.5h-6zM7.5 15l3-3.5h-6zM0 7.5l3.5-3v6zM15 7.5l-3.5-3v6z" fill="#000"/><path d="M7.5 2v11M2 7.5h11" stroke="#000" stroke-width="1.8"/></svg>
<svg style="left:796.5px;top:7px" width="14" height="14" viewBox="0 0 14 14"><path d="M1 4.5v-3.5h3.5M9.5 1h3.5v3.5M13 9.5v3.5h-3.5M4.5 13h-3.5v-3.5" fill="none" stroke="#000" stroke-width="1.4"/><path d="M2 2l10 10M12 2l-10 10" stroke="#000" stroke-width="1.4"/><rect x="5" y="5" width="4" height="4" fill="#c4cfe0" stroke="#000" stroke-width="1.3"/></svg>
<svg style="left:818px;top:7.5px" width="15" height="13" viewBox="0 0 15 13"><path d="M13.5 1l-12 5.5 12 5" fill="none" stroke="#000" stroke-width="1.8" stroke-linejoin="round"/><path d="M11.5 3.5v1.5M11.5 7v3" stroke="#000" stroke-width="1.6"/></svg>
<svg style="left:841px;top:7px" width="13" height="14" viewBox="0 0 13 14"><path d="M6.5 0.5l5.5 4.5h-11z" fill="none" stroke="#000" stroke-width="1.3"/><path d="M4.5 5c0 3-1 5-2.5 7h9c-1.5-2-2.5-4-2.5-7M0.5 12.5h12" fill="none" stroke="#000" stroke-width="1.5"/><path d="M5 8h3" stroke="#000" stroke-width="1.2"/></svg>
<svg style="left:863px;top:6.5px" width="13" height="16" viewBox="0 0 13 16"><circle cx="8" cy="8" r="6.5" fill="none" stroke="#000" stroke-width="2" stroke-dasharray="2 1.6"/><circle cx="8" cy="8" r="3.2" fill="#c4cfe0" stroke="#000" stroke-width="1.6"/></svg>
</div>
<div id="sb"><span id="sbt">Create polyhedra around the selected atoms directly</span>
<div class="ssep" style="left:607px;height:13px"></div>
<div class="ssep" style="left:710px;height:13px"></div>
<div class="ssep" style="left:737px;height:13px"></div>
<div class="ssep" style="left:765px;height:17px"></div><span id="apc">APC</span><div class="ssep" style="left:793px;height:17px"></div><div id="aptab"><span>Auto Picture</span></div></div>
<div id="bot"></div>
<div id="tip"><span>Add Polyhedra Directly (Shift+Ctrl+H)</span></div>
</body></html>
